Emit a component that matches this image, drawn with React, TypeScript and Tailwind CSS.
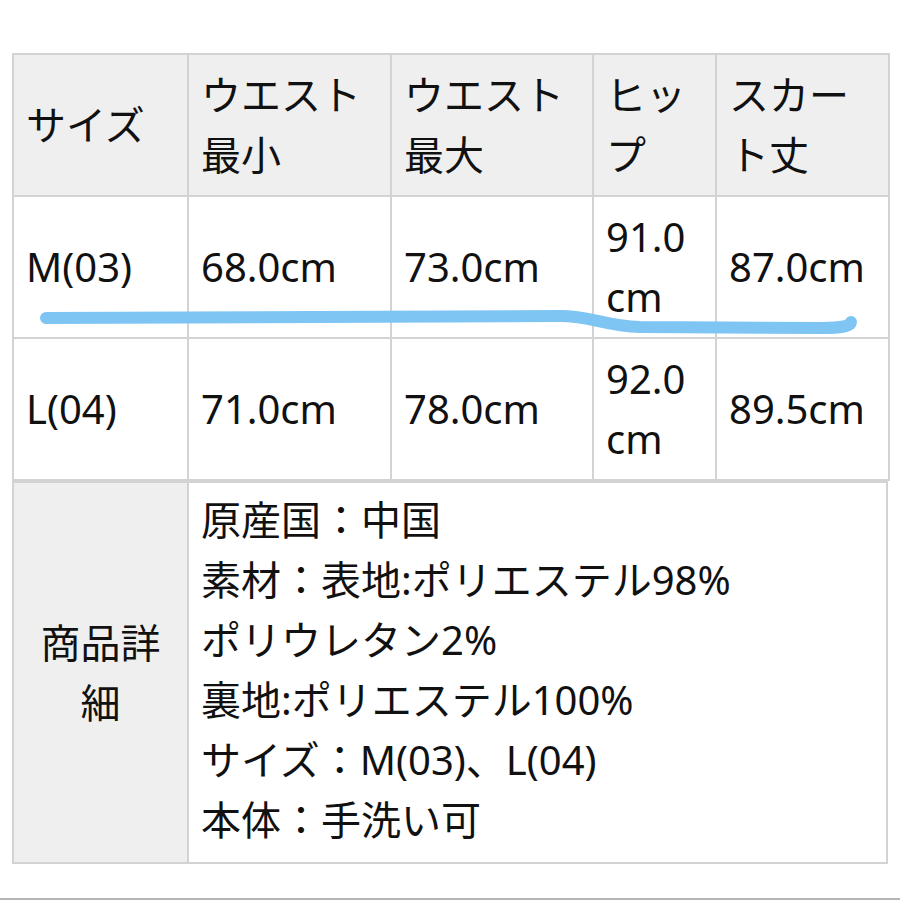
import React from "react";

const font = "font-['Noto_Sans','Noto_Sans_CJK_JP',sans-serif]";

const cell = "border-2 border-[#d3d3d3] px-[12px] py-[10px] align-middle text-left font-normal";

const rows = [
  { size: "M(03)", min: "68.0cm", max: "73.0cm", hip: ["91.0", "cm"], len: "87.0cm" },
  { size: "L(04)", min: "71.0cm", max: "78.0cm", hip: ["92.0", "cm"], len: "89.5cm" },
];

const details = [
  "原産国：中国",
  "素材：表地:ポリエステル98%",
  "ポリウレタン2%",
  "裏地:ポリエステル100%",
  "サイズ：M(03)、L(04)",
  "本体：手洗い可",
];

export default function App() {
  return (
    <div className={`relative h-[900px] w-[900px] overflow-hidden bg-white text-[40px] font-normal leading-[60px] text-[#111] ${font}`}>
      <div className="pl-[12px] pt-[53px]">
        <table className="w-[876px] table-fixed border-collapse">
          <colgroup>
            <col className="w-[175px]" />
            <col className="w-[203px]" />
            <col className="w-[202px]" />
            <col className="w-[123px]" />
            <col className="w-[173px]" />
          </colgroup>
          <thead>
            <tr className="bg-[#efefef]">
              <th className={cell}>サイズ</th>
              <th className={cell}>ウエスト最小</th>
              <th className={cell}>ウエスト最大</th>
              <th className={cell}>ヒップ</th>
              <th className={cell}>スカート丈</th>
            </tr>
          </thead>
          <tbody>
            {rows.map((r) => (
              <tr key={r.size}>
                <td className={cell}>{r.size}</td>
                <td className={cell}>{r.min}</td>
                <td className={cell}>{r.max}</td>
                <td className={cell}>
                  {r.hip[0]}
                  <br />
                  {r.hip[1]}
                </td>
                <td className={cell}>{r.len}</td>
              </tr>
            ))}
          </tbody>
        </table>

        <table className="w-[876px] table-fixed border-collapse">
          <colgroup>
            <col className="w-[175px]" />
            <col />
          </colgroup>
          <tbody>
            <tr>
              <th className="border-2 border-[#d3d3d3] bg-[#efefef] px-[12px] text-center align-middle font-normal">
                商品詳細
              </th>
              <td className="border-2 border-[#d3d3d3] px-[12px] pb-[12px] pt-[7px] align-top">
                {details.map((d) => (
                  <div key={d} className="leading-[60px]">{d}</div>
                ))}
              </td>
            </tr>
          </tbody>
        </table>
      </div>

      <div className="absolute bottom-0 left-0 h-[2px] w-full bg-[#b5b5b5]" />

      {/* hand-drawn highlight under the M row */}
      <svg className="pointer-events-none absolute inset-0" width="900" height="900" viewBox="0 0 900 900">
        <path
          d="M46 318 L560 316 C592 316 604 326 640 327 L822 328 Q851 328 851 322"
          fill="none"
          stroke="#7ec5f4"
          strokeWidth="12"
          strokeLinecap="round"
          strokeLinejoin="round"
        />
      </svg>
    </div>
  );
}
